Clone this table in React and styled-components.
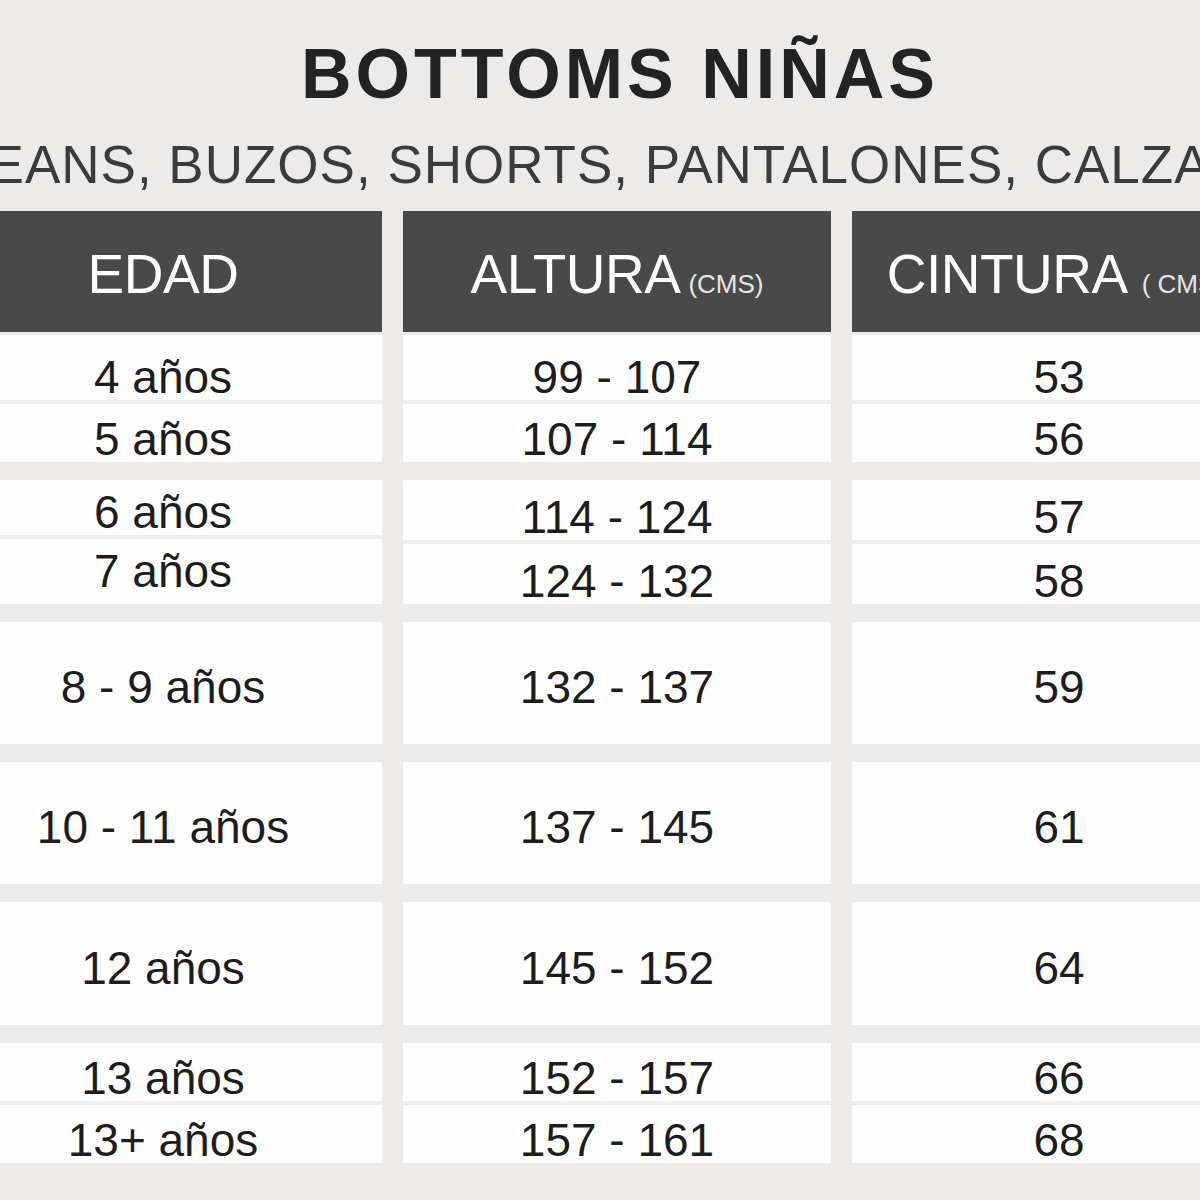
import React from "react";
import styled, { createGlobalStyle } from "styled-components";

const Global = createGlobalStyle`
  html, body { margin: 0; padding: 0; background: #ecebe9; }
  body { font-family: "Liberation Sans", Arial, sans-serif; overflow: hidden; }
`;

const Page = styled.main`
  width: 1200px;
  height: 1200px;
  overflow: hidden;
  background: #ecebe9;
  display: flex;
  flex-direction: column;
  padding-top: 39px;
  box-sizing: border-box;
`;

const Title = styled.h1`
  margin: 0;
  padding-left: 40px;
  text-align: center;
  font-size: 70px;
  line-height: 70px;
  font-weight: 700;
  letter-spacing: 4px;
  color: #232323;
  white-space: nowrap;
`;

const Subtitle = styled.p`
  margin: 29px 0 0 -216px;
  width: 1640px;
  text-align: center;
  font-size: 53px;
  line-height: 53px;
  letter-spacing: 1px;
  color: #3b3b3b;
  white-space: nowrap;
`;

const Table = styled.div`
  display: grid;
  grid-template-columns: 438px 428px 414px;
  column-gap: 21px;
  margin-left: -56px;
  margin-top: 20px;
`;

const Column = styled.section`
  display: flex;
  flex-direction: column;
`;

const Header = styled.div`
  height: 121px;
  background: #4a4949;
  color: #ffffff;
  display: flex;
  justify-content: center;
  align-items: baseline;
  padding-top: 36px;
  box-sizing: border-box;
  white-space: nowrap;
  overflow: hidden;
`;

const HeadLabel = styled.span`
  font-size: 55px;
  line-height: 55px;
  letter-spacing: -0.5px;
`;

const Unit = styled.span`
  font-size: 26px;
  margin-left: ${(p) => p.$gap}px;
  color: #e6e6e6;
`;

const Groups = styled.div`
  display: flex;
  flex-direction: column;
  gap: 18px;
  margin-top: 3px;
`;

const Group = styled.div`
  height: ${(p) => p.$h}px;
  display: flex;
  flex-direction: column;
  gap: 4px;
  background: #efeeed;
`;

const Cell = styled.div`
  flex: ${(p) => p.$grow} 1 0;
  background: #fefefe;
  display: flex;
  justify-content: center;
  align-items: ${(p) => (p.$single ? "center" : "flex-end")};
  padding-top: ${(p) => (p.$single ? 8 : 0)}px;
  padding-bottom: ${(p) => p.$lift || 0}px;
  box-sizing: border-box;
  font-size: 46px;
  line-height: 46px;
  color: #1d1d1d;
  white-space: nowrap;
`;

const heights = [127, 124, 122, 122, 123, 120];

const data = [
  { edad: ["4 años", "5 años"], altura: ["99 - 107", "107 - 114"], cintura: ["53", "56"], grow: [65, 58] },
  { edad: ["6 años", "7 años"], altura: ["114 - 124", "124 - 132"], cintura: ["57", "58"], lift: [0, 10] },
  { edad: ["8 - 9 años"], altura: ["132 - 137"], cintura: ["59"] },
  { edad: ["10 - 11 años"], altura: ["137 - 145"], cintura: ["61"] },
  { edad: ["12 años"], altura: ["145 - 152"], cintura: ["64"] },
  { edad: ["13 años", "13+ años"], altura: ["152 - 157", "157 - 161"], cintura: ["66", "68"] },
];

const columns = [
  { key: "edad", label: "EDAD" },
  { key: "altura", label: "ALTURA", unit: "(CMS)", gap: 8 },
  { key: "cintura", label: "CINTURA", unit: "( CMS )", gap: 14 },
];

export default function App() {
  return (
    <>
      <Global />
      <Page>
        <Title>BOTTOMS NIÑAS</Title>
        <Subtitle>JEANS, BUZOS, SHORTS, PANTALONES, CALZAS</Subtitle>
        <Table>
          {columns.map((col) => (
            <Column key={col.key}>
              <Header>
                <HeadLabel>{col.label}</HeadLabel>
                {col.unit && <Unit $gap={col.gap}>{col.unit}</Unit>}
              </Header>
              <Groups>
                {data.map((g, i) => (
                  <Group key={i} $h={heights[i]}>
                    {g[col.key].map((v, j) => (
                      <Cell
                        key={j}
                        $grow={g.grow ? g.grow[j] : 1}
                        $single={g[col.key].length === 1}
                        $lift={col.key === "edad" && g.lift ? g.lift[j] : 0}
                      >
                        {v}
                      </Cell>
                    ))}
                  </Group>
                ))}
              </Groups>
            </Column>
          ))}
        </Table>
      </Page>
    </>
  );
}
